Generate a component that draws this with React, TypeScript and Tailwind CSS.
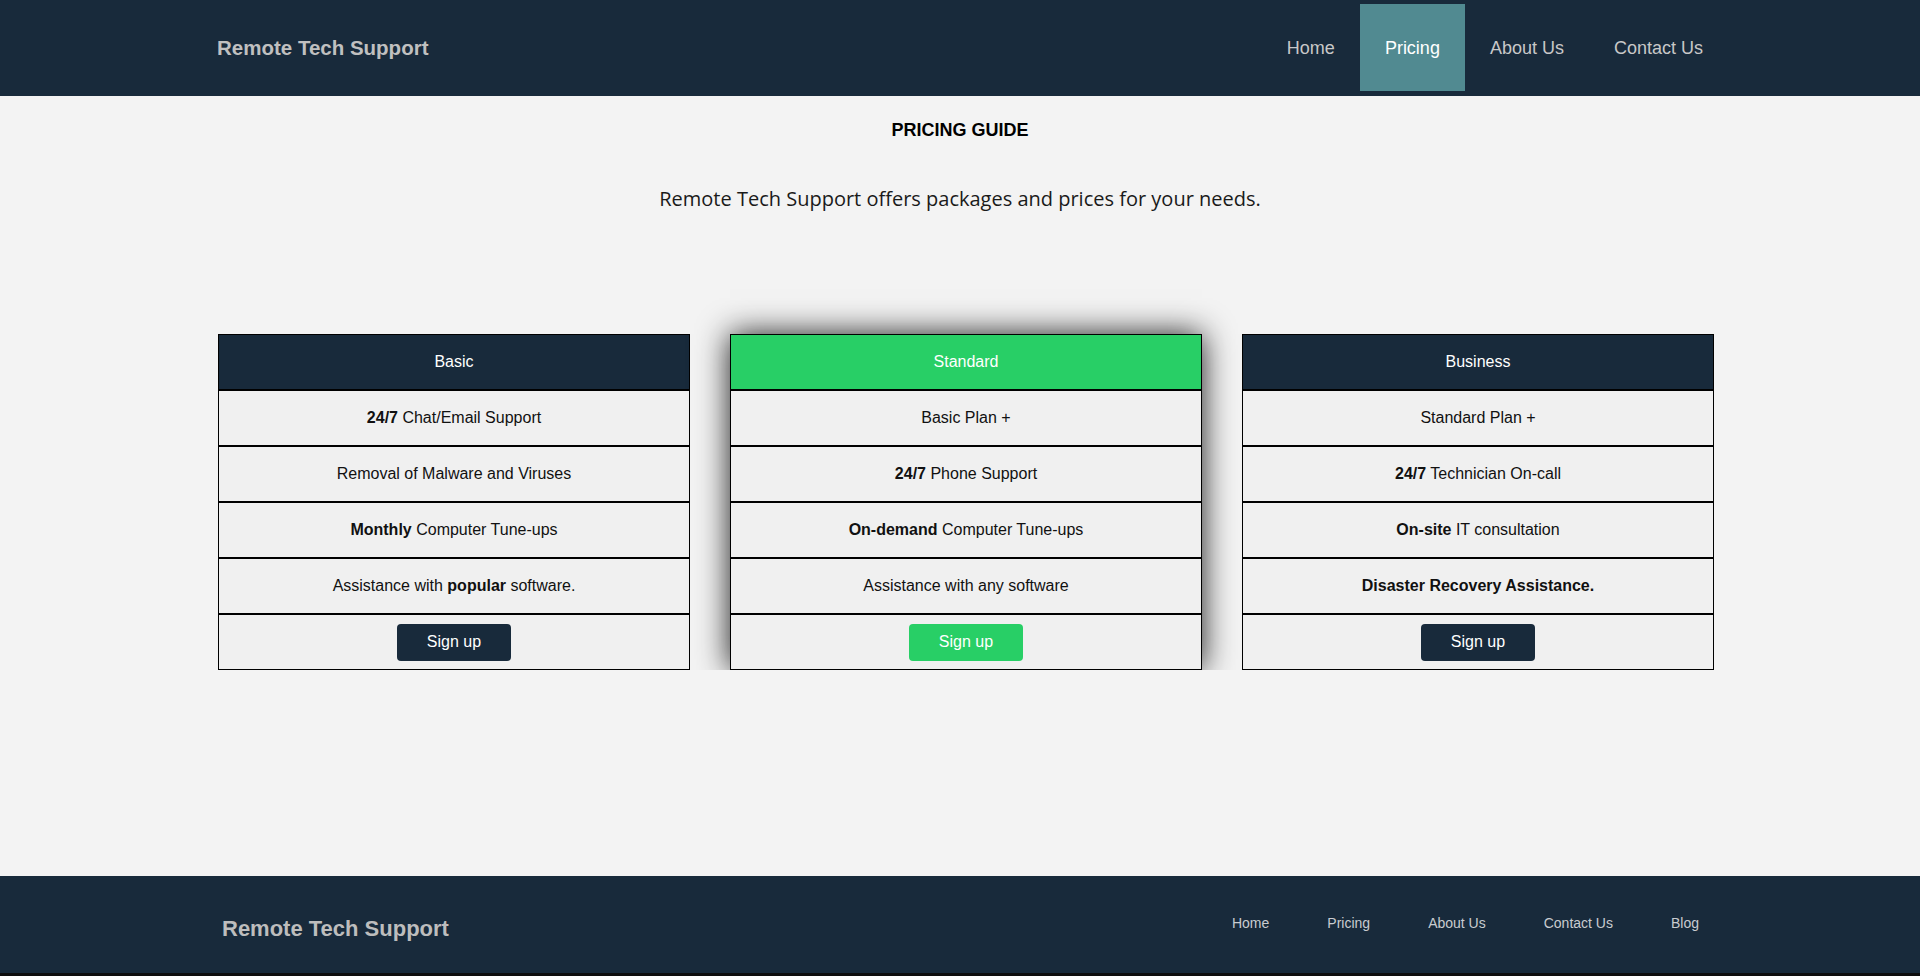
import type { ReactNode } from "react";

const sans = { fontFamily: '"Liberation Sans", Arial, sans-serif' };

interface Plan {
  name: string;
  featured?: boolean;
  rows: ReactNode[];
}

const plans: Plan[] = [
  {
    name: "Basic",
    rows: [
      <><b>24/7</b> Chat/Email Support</>,
      <>Removal of Malware and Viruses</>,
      <><b>Monthly</b> Computer Tune-ups</>,
      <>Assistance with <b>popular</b> software.</>,
    ],
  },
  {
    name: "Standard",
    featured: true,
    rows: [
      <>Basic Plan +</>,
      <><b>24/7</b> Phone Support</>,
      <><b>On-demand</b> Computer Tune-ups</>,
      <>Assistance with any software</>,
    ],
  },
  {
    name: "Business",
    rows: [
      <>Standard Plan +</>,
      <><b>24/7</b> Technician On-call</>,
      <><b>On-site</b> IT consultation</>,
      <><b>Disaster Recovery Assistance.</b></>,
    ],
  },
];

function PlanCard({ plan }: { plan: Plan }) {
  const accent = plan.featured ? "bg-[#28cf66]" : "bg-[#182a3b]";
  return (
    <div className={`flex flex-col ${plan.featured ? "shadow-[0_0_30px_rgba(0,0,0,0.9)]" : ""}`}>
      <div className={`flex h-14 items-center justify-center border border-black text-base text-white ${accent}`}>
        {plan.name}
      </div>
      {plan.rows.map((r, i) => (
        <div key={i} className="flex h-14 items-center justify-center border border-black bg-[#f0f0f0] text-base text-[#111]">
          <span>{r}</span>
        </div>
      ))}
      <div className="flex h-14 items-center justify-center border border-black bg-[#f0f0f0]">
        <button className={`h-[37px] w-[114px] rounded-[4px] text-base text-white ${accent}`}>Sign up</button>
      </div>
    </div>
  );
}

export default function App() {
  const nav = ["Home", "Pricing", "About Us", "Contact Us"];
  const footLinks = ["Home", "Pricing", "About Us", "Contact Us", "Blog"];

  return (
    <div className="min-h-[976px] bg-[#f3f3f3]" style={sans}>
      <header className="h-24 bg-[#182a3b]">
        <div className="mx-auto flex h-full w-[80%] items-center justify-between">
          <div className="pl-[25px] text-[20.5px] font-bold text-[#c0c0c0]">Remote Tech Support</div>
          <nav className="flex h-full pt-1 pb-[5px]">
            {nav.map((n) => (
              <a
                key={n}
                className={`flex items-center px-[25px] text-lg ${n === "Pricing" ? "bg-[#518a91] text-white" : "text-[#c8c8c8]"}`}
              >
                {n}
              </a>
            ))}
          </nav>
        </div>
      </header>

      <main className="h-[780px]">
        <h2 className="pt-[21px] text-center text-lg leading-[27px] font-bold text-black">PRICING GUIDE</h2>
        <p
          className="mt-10 text-center text-[20px] leading-[30px] text-[#1a1a1a]"
          style={{ fontFamily: '"Open Sans", sans-serif' }}
        >
          Remote Tech Support offers packages and prices for your needs.
        </p>
        <div className="overflow-hidden">
          <div className="mx-auto grid w-[80%] grid-cols-3 gap-[40px] pt-[120px] pr-[14px] pl-[26px]">
            {plans.map((p) => (
              <PlanCard key={p.name} plan={p} />
            ))}
          </div>
        </div>
      </main>

      <footer className="h-[97px] bg-[#182a3b]">
        <div className="mx-auto flex h-full w-[80%] items-center justify-between">
          <div className="pt-[7px] pl-[30px] text-[22px] font-bold text-[#bdbdbd]">Remote Tech Support</div>
          <div className="flex pb-[4px]">
            {footLinks.map((l) => (
              <a key={l} className="px-[29px] text-sm text-[#c9ccd0]">
                {l}
              </a>
            ))}
          </div>
        </div>
      </footer>
      <div className="h-[3px] bg-[#0e0e0e]" />
    </div>
  );
}
